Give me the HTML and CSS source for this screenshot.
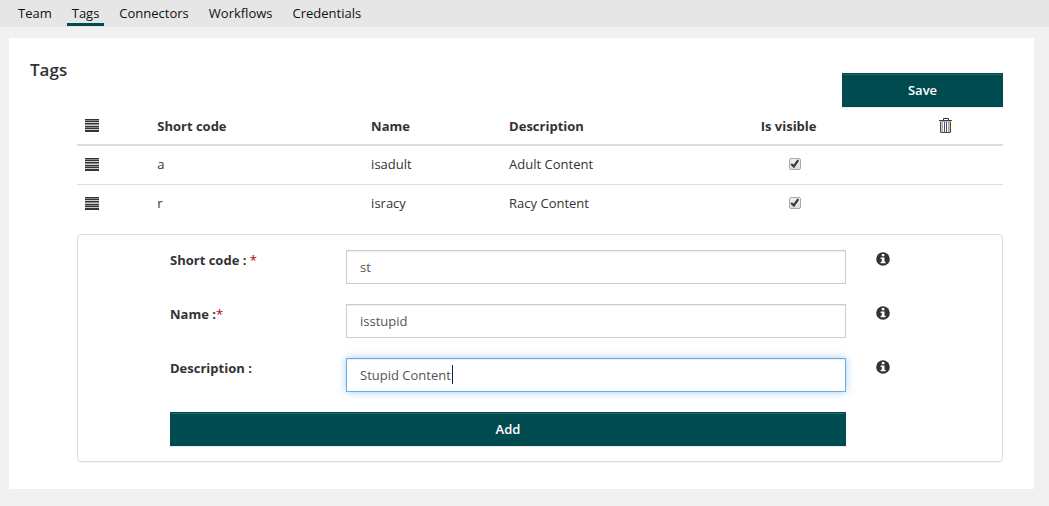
FILE: index.html
```html
<!DOCTYPE html>
<html lang="en">
<head>
<meta charset="utf-8">
<title>Tags</title>
<meta name="viewport" content="width=device-width, initial-scale=1">
<link rel="stylesheet" href="styles.css">
</head>
<body>
<svg class="defs" aria-hidden="true">
  <symbol id="drag" viewBox="0 0 14 13">
    <path d="M0 0h14v13H0z" fill="#333"/>
    <path d="M0 1h14v1H0zM0 5h14v1H0zM0 8h14v1H0z" fill="#8a8a8a"/>
    <path d="M0 3h14v1H0zM0 6h14v1H0zM0 10h14v1H0z" fill="#ccc"/>
  </symbol>
  <symbol id="info" viewBox="0 0 14 14">
    <circle cx="7" cy="7" r="6.8" fill="#333"/>
    <path d="M5.8 2h2.6v2.2H5.8zM4.6 5.4h3.9v4.3h1.1v1.5H4.6V9.700h1.200V6.900H4.600z" fill="#fff"/>
  </symbol>
</svg>
<nav class="tabs">
  <a href="#team" class="tab">Team</a>
  <a href="#tags" class="tab tab-active" aria-current="page">Tags</a>
  <a href="#connectors" class="tab">Connectors</a>
  <a href="#workflows" class="tab">Workflows</a>
  <a href="#credentials" class="tab">Credentials</a>
</nav>
<main class="card">
  <h1 class="title">Tags</h1>
  <div class="content">
    <div class="toolbar"><button type="button" class="btn btn-save">Save</button></div>
    <table class="tags">
      <colgroup><col class="c-drag"><col class="c-code"><col class="c-name"><col class="c-desc"><col class="c-visible"><col class="c-delete"></colgroup>
      <thead>
        <tr>
          <th><svg class="drag" role="img" aria-label="Order"><use href="#drag"/></svg></th>
          <th>Short code</th><th>Name</th><th>Description</th><th class="center">Is visible</th>
          <th class="center"><svg class="trash" viewBox="0 0 13 15" role="img" aria-label="Delete">
            <path d="M4.500 2V.5h5V2" fill="none" stroke="#333"/>
            <path d="M0 2h13v1H0z" fill="#444"/><path d="M1 3h11v1H1z" fill="#aaa"/>
            <path d="M1.500 4v10.500h10V4" fill="#fff" stroke="#4a4a50"/>
            <path d="M2.500 4v10" stroke="#f0c898"/><path d="M3.500 4v10" stroke="#70b8ea"/><path d="M5.500 4v10" stroke="#335a98"/>
            <path d="M7.500 4v10" stroke="#8c3868"/><path d="M9.500 4v10" stroke="#e09a50"/><path d="M10.500 4v10" stroke="#a0cdf0"/>
          </svg></th>
        </tr>
      </thead>
      <tbody>
        <tr>
          <td><svg class="drag" aria-hidden="true"><use href="#drag"/></svg></td>
          <td>a</td><td>isadult</td><td>Adult Content</td>
          <td class="center visible"><input type="checkbox" class="check" aria-label="isadult is visible" checked></td><td></td>
        </tr>
        <tr>
          <td><svg class="drag" aria-hidden="true"><use href="#drag"/></svg></td>
          <td>r</td><td>isracy</td><td>Racy Content</td>
          <td class="center visible"><input type="checkbox" class="check" aria-label="isracy is visible" checked></td><td></td>
        </tr>
      </tbody>
    </table>
    <form class="panel">
      <label class="label" for="code">Short code : <span class="required">*</span></label>
      <input class="field" id="code" type="text" value="st" required>
      <svg class="info" role="img" aria-label="About short code"><use href="#info"/></svg>
      <label class="label" for="name">Name :<span class="required">*</span></label>
      <input class="field" id="name" type="text" value="isstupid" required>
      <svg class="info" role="img" aria-label="About name"><use href="#info"/></svg>
      <label class="label" for="description">Description :</label>
      <div class="active-field"><input class="field" id="description" type="text" value="Stupid Content" autofocus></div>
      <svg class="info" role="img" aria-label="About description"><use href="#info"/></svg>
      <button type="button" class="btn btn-add">Add</button>
    </form>
  </div>
</main>
</body>
</html>
```
FILE: styles.css
```css
* { box-sizing: border-box; }
body {
  margin: 0;
  background: #f1f1f1;
  color: #333;
  font: 13px/20px "Open Sans", "Noto Sans", sans-serif;
}
.defs { display: none; }
.tabs {
  display: flex;
  gap: 10px;
  height: 27px;
  padding: 0 13px;
  background: #e6e6e6;
}
.tab {
  height: 26px;
  padding: 3px 5px 0;
  border-bottom: 3px solid transparent;
  color: #111;
  text-decoration: none;
}
.tab-active { border-color: #004b4f; }
.card {
  margin: 11px 15px 17px 9px;
  padding: 20px 31px 27px 21px;
  background: #fff;
}
.title {
  margin: 0;
  font-size: 17px;
  font-weight: 600;
  line-height: 24px;
}
.content { padding-left: 47px; }
.toolbar {
  display: flex;
  justify-content: flex-end;
  margin-top: -9px;
}
.btn {
  height: 34px;
  padding: 0;
  border: 1px solid #004b4f;
  background: #004b4f;
  box-shadow: inset 0 1px 0 rgba(255, 255, 255, .15), 0 1px 1px rgba(0, 0, 0, .08);
  color: #fff;
  font: 600 13px/20px "Open Sans", "Noto Sans", sans-serif;
}
.btn-save { width: 161px; }
.tags {
  width: 100%;
  margin-bottom: 11px;
  border-collapse: separate;
  border-spacing: 0;
  table-layout: fixed;
}
.c-drag { width: 7.8%; }
.c-code { width: 23.1%; }
.c-name { width: 14.9%; }
.c-desc { width: 20.4%; }
.c-visible { width: 21.3%; }
.c-delete { width: 12.5%; }
.tags th, .tags td {
  height: 39px;
  padding: 0 8px;
  text-align: left;
  vertical-align: middle;
}
.tags th { font-weight: 700; border-bottom: 2px solid #ddd; }
.tags td { height: 38px; padding-bottom: 2px; }
.tags tr + tr td { height: 39px; border-top: 1px solid #ddd; }
.tags .center { text-align: center; }
.tags .visible { padding-left: 20px; }
.drag { display: block; width: 14px; height: 13px; }
.trash { display: block; width: 13px; height: 15px; margin: 0 auto; }
.check {
  appearance: none;
  display: block;
  width: 12px;
  height: 12px;
  margin: 0 auto;
  border: 1px solid #aaa;
  border-radius: 2px;
  background: linear-gradient(#eee, #ddd);
}
.check:checked::before {
  content: "";
  display: block;
  width: 10px;
  height: 10px;
  background: #3a3a3a;
  clip-path: polygon(8% 56%, 24% 42%, 40% 58%, 78% 4%, 96% 18%, 44% 92%);
}
.panel {
  display: grid;
  grid-template-columns: 176fr 500fr 64fr;
  row-gap: 20px;
  padding: 15px 92px;
  border: 1px solid #ddd;
  border-radius: 4px;
  box-shadow: 0 1px 1px rgba(0, 0, 0, .05);
}
.label { font-weight: 700; }
.required { color: #b00000; font-weight: 400; }
.field {
  width: 100%;
  height: 34px;
  padding: 6px 13px;
  border: 1px solid #ccc;
  border-radius: 0;
  background: #fff;
  box-shadow: inset 0 1px 1px rgba(0, 0, 0, .075);
  color: #555;
  font: 13px/20px "Open Sans", "Noto Sans", sans-serif;
}
.field:focus {
  outline: 0;
  border-color: #66afe9;
  box-shadow: inset 0 1px 1px rgba(0, 0, 0, .075), 0 0 8px rgba(102, 175, 233, .6);
  caret-color: transparent;
}
.active-field { position: relative; height: 34px; }
.active-field:focus-within::after {
  content: "";
  position: absolute;
  top: 7px;
  left: 106px;
  width: 1px;
  height: 19px;
  background: #222;
}
.info { width: 14px; height: 14px; margin: 2px 0 0 30px; }
.btn-add { grid-column: 1 / 3; }
```
